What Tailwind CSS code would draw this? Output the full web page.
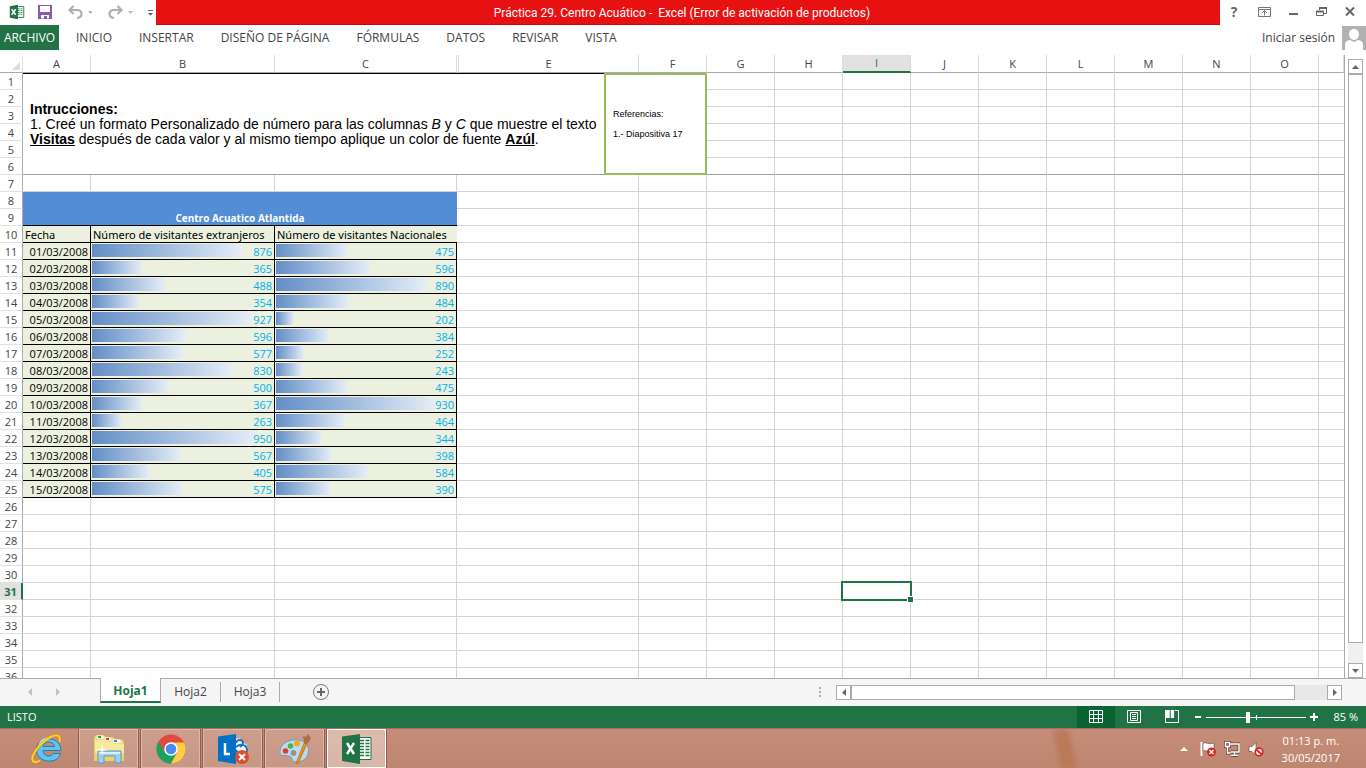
<!DOCTYPE html>
<html lang="es">
<head>
    <meta charset="UTF-8">
    <meta name="viewport" content="width=device-width, initial-scale=1.0">
    <title>Práctica 29. Centro Acuático - Excel</title>
    <script src="https://cdn.jsdelivr.net/npm/@tailwindcss/browser@4"></script>
</head>
<body class="h-screen overflow-hidden flex flex-col bg-white text-[#444444] text-xs font-['Open_Sans','Noto_Sans',sans-serif]">

    <!-- Title bar -->
    <header class="h-[25px] shrink-0 flex">
        <div class="w-[156px] shrink-0 flex items-center pl-2 pb-[2px]">
            <svg class="w-5 h-4 mr-3" viewBox="0 0 20 16">
                <path d="M10 2h7.500v12H10z" fill="#fff" stroke="#217346"/>
                <path d="M11 4.500h2M14 4.500h2M11 6.500h2M14 6.500h2M11 8.500h2M14 8.500h2M11 10.500h2M14 10.500h2" stroke="#217346"/>
                <path d="M2 1.500L11 0v16l-9-1.500z" fill="#217346"/>
                <path d="M4 5l4.500 6M8.500 5L4 11" stroke="#fff" stroke-width="1.600"/>
            </svg>
            <button aria-label="Guardar" class="mr-4">
                <svg class="w-[14px] h-[14px]" viewBox="0 0 14 14">
                    <path d="M0 0h14v14H0z" fill="#8b5bae"/>
                    <path d="M2 1h10v6H2zM3 10h8v3.500H9V11H6v2.500H3z" fill="#fff"/>
                </svg>
            </button>
            <button aria-label="Deshacer" class="mr-4">
                <svg class="w-6 h-4" viewBox="0 0 24 16">
                    <path d="M5.500 2L1.500 6l4 4M2 6h7c6 0 6 7.500 0 8" fill="none" stroke="#b0b0b0" stroke-width="2.200"/>
                    <path d="M20 7h5l-2.500 3z" fill="#b8b8b8"/>
                </svg>
            </button>
            <button aria-label="Rehacer" class="mr-3">
                <svg class="w-7 h-4" viewBox="0 0 28 16">
                    <path d="M9.500 2l4 4-4 4M13 6H6c-6 0-6 7.500 0 8" fill="none" stroke="#b0b0b0" stroke-width="2.200"/>
                    <path d="M20 7h5l-2.500 3z" fill="#b8b8b8"/>
                </svg>
            </button>
            <button aria-label="Personalizar barra de acceso rápido">
                <svg class="w-2 h-3" viewBox="0 0 8 12">
                    <path d="M0 4.500h5" stroke="#666"/>
                    <path d="M0 7h5L2.500 9.500z" fill="#555"/>
                </svg>
            </button>
        </div>
        <h1 class="flex-1 bg-[#e81111] border-b border-[#c90d0d] text-white text-center whitespace-pre leading-6 pt-px pr-3 font-['Roboto',sans-serif]">Práctica 29. Centro Acuático -  Excel (Error de activación de productos)</h1>
        <div class="w-[146px] shrink-0 flex items-center justify-between pl-[6px] pr-[10px] pb-[2px] text-[#666666]">
            <button aria-label="Ayuda" class="w-4 text-sm leading-4 font-bold">?</button>
            <button aria-label="Opciones de presentación de la cinta">
                <svg class="w-[14px] h-3" viewBox="0 0 14 12" fill="none" stroke="#777"><path d="M.5 1.500h12v9H.5zM.5 3.500h12M6.500 9.500v-5M4 7l2.500-2.500L9 7"/></svg>
            </button>
            <button aria-label="Minimizar">
                <svg class="w-3 h-3" viewBox="0 0 12 12"><path d="M1 8h9" stroke="#666" stroke-width="2"/></svg>
            </button>
            <button aria-label="Restaurar">
                <svg class="w-3 h-3" viewBox="0 0 12 12" fill="none" stroke="#666"><path d="M3.500 4V2.500h7v5H8"/><path d="M3 2h8" stroke-width="2"/><path d="M.5 5.500h7v4h-7z"/><path d="M0 5.500h8" stroke-width="2"/></svg>
            </button>
            <button aria-label="Cerrar">
                <svg class="w-3 h-3" viewBox="0 0 12 12"><path d="M2 1.500l8 8M10 1.500l-8 8" stroke="#666" stroke-width="2"/></svg>
            </button>
        </div>
    </header>

    <!-- Ribbon tabs -->
    <nav class="h-[25px] shrink-0 flex items-center gap-[27px] mb-[5px]">
        <button class="h-full w-[59px] bg-[#217346] text-white -mr-[10px]">ARCHIVO</button>
        <button>INICIO</button>
        <button>INSERTAR</button>
        <button>DISEÑO DE PÁGINA</button>
        <button>FÓRMULAS</button>
        <button>DATOS</button>
        <button>REVISAR</button>
        <button>VISTA</button>
        <div class="ml-auto flex items-center gap-[7px]">
            <a href="#">Iniciar sesión</a>
            <svg class="w-6 h-6" viewBox="0 0 24 24">
                <path d="M0 0h24v24H0z" fill="#b1b1b1"/>
                <path d="M12 3c3.200 0 5 2.300 5 5.300S14.800 14 12 14s-5-2.700-5-5.700S8.800 3 12 3zM3 24v-5c0-3 1.500-4.500 5-5l4 2 4-2c3.500.5 5 2 5 5v5z" fill="#fff"/>
            </svg>
        </div>
    </nav>

    <!-- Worksheet -->
    <main class="flex-1 min-h-0 flex bg-white">
        <div class="flex-1 min-w-0 relative overflow-hidden border-r border-[#ababab]">
            <table class="w-full table-fixed border-separate border-spacing-0 text-[11px] leading-[14px]">
                <colgroup>
                    <col class="w-[23px]"><col class="w-[68px]"><col class="w-[184px]"><col class="w-[182px]"><col class="w-[2px]"><col class="w-[180px]">
                    <col class="w-[68px]"><col class="w-[68px]"><col class="w-[68px]"><col class="w-[68px]"><col class="w-[68px]">
                    <col class="w-[68px]"><col class="w-[68px]"><col class="w-[68px]"><col class="w-[68px]"><col class="w-[68px]"><col>
                </colgroup>
                <thead id="sheet-head"></thead>
                <tbody id="sheet-body"></tbody>
            </table>
            <!-- Text box floating over the cells -->
            <div class="absolute left-[604px] top-[18px] w-[103px] h-[102px] bg-white border-2 border-[#9bbb59] px-[7px] flex flex-col justify-center gap-2 text-black text-[9px] leading-3 font-['Liberation_Sans',sans-serif]">
                <p>Referencias:</p>
                <p class="whitespace-nowrap">1.- Diapositiva 17</p>
            </div>
        </div>
        <!-- Vertical scrollbar -->
        <div class="w-[21px] shrink-0 flex flex-col pl-[3px] pr-[3px] pt-1">
            <button aria-label="Subir" class="h-[15px] border border-[#ababab] bg-white flex items-center justify-center">
                <svg class="w-[7px] h-1" viewBox="0 0 7 4"><path d="M0 4h7L3.500 0z" fill="#666"/></svg>
            </button>
            <div class="flex-1 bg-[#f0f0f0] pb-5 flex">
                <div class="flex-1 border border-[#ababab] bg-white"></div>
            </div>
            <button aria-label="Bajar" class="h-[15px] border border-[#ababab] bg-white flex items-center justify-center">
                <svg class="w-[7px] h-1" viewBox="0 0 7 4"><path d="M0 0h7L3.500 4z" fill="#666"/></svg>
            </button>
        </div>
    </main>

    <!-- Sheet tabs -->
    <div class="h-7 shrink-0 flex bg-[#f5f5f5] border-t border-[#ababab]">
        <div class="w-[100px] shrink-0 flex items-center justify-center gap-6 pb-[2px] pr-3">
            <svg class="w-1 h-2" viewBox="0 0 4 8"><path d="M4 0v8L0 4z" fill="#c0c0c0"/></svg>
            <svg class="w-1 h-2" viewBox="0 0 4 8"><path d="M0 0v8l4-4z" fill="#c0c0c0"/></svg>
        </div>
        <button class="w-[61px] h-[25px] -mt-px pt-[2px] bg-white border-x border-x-[#ababab] border-b-2 border-b-[#217346] text-[#217346] font-bold">Hoja1</button>
        <button class="w-[60px] h-5 mt-[3px] border-r border-[#ababab]">Hoja2</button>
        <button class="w-[59px] h-5 mt-[3px] border-r border-[#ababab]">Hoja3</button>
        <button aria-label="Hoja nueva" class="ml-8 mb-[2px]">
            <svg class="w-[18px] h-[18px]" viewBox="0 0 18 18" fill="none" stroke="#777"><circle cx="9" cy="9" r="7.500"/><path d="M9 5v8M5 9h8" stroke="#666" stroke-width="2"/></svg>
        </button>
        <svg class="ml-auto mt-[7px] w-1 h-3 mr-[14px]" viewBox="0 0 4 12"><path d="M1 1h2v2H1zM1 5h2v2H1zM1 9h2v2H1z" fill="#ababab"/></svg>
        <!-- Horizontal scrollbar -->
        <div class="w-[506px] h-[15px] mt-[6px] mr-6 flex bg-[#e8e8e8]">
            <button aria-label="Izquierda" class="w-[15px] border border-[#ababab] bg-white flex items-center justify-center">
                <svg class="w-1 h-[7px]" viewBox="0 0 4 7"><path d="M4 0v7L0 3.500z" fill="#666"/></svg>
            </button>
            <div class="flex-1 mr-8 bg-white border border-[#ababab]"></div>
            <button aria-label="Derecha" class="w-[15px] border border-[#ababab] bg-white flex items-center justify-center">
                <svg class="w-1 h-[7px]" viewBox="0 0 4 7"><path d="M0 0v7l4-3.500z" fill="#666"/></svg>
            </button>
        </div>
    </div>

    <!-- Status bar -->
    <div class="h-[22px] shrink-0 flex items-center bg-[#217346] text-white text-[11px] pl-[7px] pr-2">
        <span>LISTO</span>
        <button aria-label="Normal" class="ml-auto w-[38px] h-full bg-[#0a6332] flex items-center justify-center">
            <svg class="w-[14px] h-[14px]" viewBox="0 0 14 14" fill="none" stroke="#fff"><path d="M.5.5h13v12H.5zM4.500.5v12M9.500.5v12M.5 4.500h13M.5 8.500h13"/></svg>
        </button>
        <button aria-label="Diseño de página" class="w-[38px] h-full flex items-center justify-center">
            <svg class="w-[14px] h-[14px]" viewBox="0 0 14 14" fill="none" stroke="#fff"><path d="M.5.5h13v12H.5zM3.500 2.500h7v8h-7zM5 4.500h4M5 6.500h4M5 8.500h4"/></svg>
        </button>
        <button aria-label="Vista previa de salto de página" class="w-[38px] h-full flex items-center justify-center">
            <svg class="w-[14px] h-[14px]" viewBox="0 0 14 14"><path d="M.5.5h13v12H.5z" fill="none" stroke="#fff"/><path d="M0 0h5v8H0zM5.500 0h4v8h-4z" fill="#fff"/><path d="M5.200 0v8M9.500 0v8" stroke="#217346" stroke-width=".8"/></svg>
        </button>
        <button aria-label="Alejar" class="ml-px">
            <svg class="w-3 h-3" viewBox="0 0 12 12"><path d="M3 6h6" stroke="#fff" stroke-width="2"/></svg>
        </button>
        <div class="relative mx-[2px] flex items-center">
            <input type="range" aria-label="Zoom" min="0" max="100" value="42" class="w-[100px] h-3 appearance-none bg-[linear-gradient(#ffffff,#ffffff)] bg-[length:100%_1px] bg-center bg-no-repeat [&::-webkit-slider-thumb]:appearance-none [&::-webkit-slider-thumb]:w-1 [&::-webkit-slider-thumb]:h-[11px] [&::-webkit-slider-thumb]:bg-white">
            <span class="absolute left-1/2 top-1 w-px h-[5px] bg-white"></span>
        </div>
        <button aria-label="Acercar">
            <svg class="w-3 h-3" viewBox="0 0 12 12"><path d="M2 6h8M6 2v8" stroke="#fff" stroke-width="2"/></svg>
        </button>
        <span class="w-[38px] text-right">85 %</span>
    </div>

    <!-- Windows taskbar -->
    <footer class="h-10 shrink-0 relative overflow-hidden flex items-stretch gap-[3px] pl-[17px] pr-[26px] border-t border-[#a56f5e] bg-linear-to-b from-[#c68d79] to-[#bd8670] text-white text-[11px]">
        <div class="absolute left-[1057px] top-0 w-4 h-10 skew-x-12 bg-[#b97450]/80 blur-[3px]"></div>
        <button aria-label="Internet Explorer" class="w-[59px] flex items-center justify-center">
            <svg class="w-8 h-8" viewBox="0 0 32 32" fill="none">
                <path d="M30 17.500H12c.3 6.500 8 7 10.500 3h7C27.500 31.500 5.500 31 5.500 16.500S29.500 2 30 17.500zM12 13.500h11.500c-.8-6-10.500-6-11.500 0z" fill="#5cc6f0" stroke="#1c7fb8"/>
                <path d="M8 13c1-6 7-8.500 11-8" stroke="#c4edfb" stroke-width="1.500"/>
                <path d="M28.500 9c1.500-6-2-8.500-9-5C10 9-1.500 23 2 28c1.500 1.800 4.500 1 7-.5" stroke="#c98f10" stroke-width="3"/>
                <path d="M28.500 9c1.500-6-2-8.500-9-5C10 9-1.500 23 2 28c1.500 1.800 4.500 1 7-.5" stroke="#fbd02f" stroke-width="2"/>
            </svg>
        </button>
        <button aria-label="Explorador de archivos" class="w-[59px] flex items-center justify-center border border-[#dcb8aa] bg-white/15 shadow-[0_0_0_1px_#8f5e50]">
            <svg class="w-8 h-8" viewBox="0 0 32 32">
                <path d="M1 4l3-2h7l2 2h7l2 2h6l3 2v20H1z" fill="#f0dc85" stroke="#c7a74b" stroke-width=".6"/>
                <path d="M4 2.500h6l1 3H4zM12 4.500h6l1 3h-7zM20 6.500h7l1 3h-8z" fill="#fff"/>
                <path d="M2 7h9l2 2h7l1 2h10v17H2z" fill="#f7ea9f"/>
                <path d="M2 20h29v8H2z" fill="#ead271"/>
                <path d="M5 3h3v2H5z" fill="#10ae3b"/><path d="M13 5h3v2h-3z" fill="#d8442b"/><path d="M21 7h3v2h-3z" fill="#2a8cde"/>
                <path d="M5 30V18h23v12h-6v-7H11v7z" fill="#9dcfec" stroke="#5a9dc5"/>
                <path d="M6 19h21v2H6z" fill="#d6effa"/>
                <path d="M9 11l1 5 5 1-5 1-1 4-1-4-5-1 5-1z" fill="#fff" fill-opacity=".8"/>
            </svg>
        </button>
        <button aria-label="Google Chrome" class="w-[59px] flex items-center justify-center border border-[#dcb8aa] bg-white/15 shadow-[0_0_0_1px_#8f5e50]">
            <svg class="w-[30px] h-[30px]" viewBox="0 0 30 30">
                <circle cx="15" cy="15" r="14.500" fill="#dd4b3e"/>
                <path d="M2.400 7.800A14.500 14.500 0 0 0 15 29.500L21 18.500 9.200 18.500z" fill="#1aa260"/>
                <path d="M15 8.500h13A14.500 14.500 0 0 1 15 29.500l6-11z" fill="#ffce44"/>
                <circle cx="15" cy="15" r="6.800" fill="#fff"/><circle cx="15" cy="15" r="5.300" fill="#4a8af4"/>
            </svg>
        </button>
        <button aria-label="Lync" class="w-[59px] flex items-center justify-center border border-[#dcb8aa] bg-white/15 shadow-[0_0_0_1px_#8f5e50]">
            <svg class="w-8 h-8" viewBox="0 0 32 32">
                <path d="M18 7c3-3 8-1 8 3 5 1 6 7 3 11l-4 5h-7z" fill="#fff"/>
                <path d="M19 10c1-4 7-4 7 0 0 2-1 3-3 4" fill="none" stroke="#0f74c8" stroke-width="1.800"/>
                <path d="M19 14c5-4 11-2 11 3 0 4-4 6-7 5-3-1-3-4-4-5" fill="none" stroke="#0f74c8" stroke-width="2"/>
                <path d="M1 3.500L19 1v30L1 28z" fill="#0072c6"/>
                <path d="M8 10v11h5" fill="none" stroke="#fff" stroke-width="2.500"/>
                <circle cx="25" cy="24" r="7" fill="#d84c2f"/>
                <path d="M22 21l6 6M28 21l-6 6" stroke="#fff" stroke-width="2"/>
            </svg>
        </button>
        <button aria-label="Paint" class="w-[59px] flex items-center justify-center border border-[#dcb8aa] bg-white/15 shadow-[0_0_0_1px_#8f5e50]">
            <svg class="w-8 h-8" viewBox="0 0 32 32">
                <path d="M1 18C2 10 11 6 19 7s12 7 10 13c-1 7-7 9-13 9-4-1-2-5-6-6S0 24 1 18z" fill="#bcdced" stroke="#6e9db8"/>
                <circle cx="14.500" cy="20" r="2.500" fill="#b98471" stroke="#6e9db8"/>
                <circle cx="6.500" cy="18" r="2.800" fill="#df3c32"/><circle cx="11.500" cy="13" r="2.800" fill="#51b34c"/><circle cx="18" cy="10.500" r="3" fill="#f2a724"/>
                <path d="M17 30l8-20 3 1-9 20z" fill="#e98c28" stroke="#b96414" stroke-width=".6"/>
                <path d="M25 10c1-2-1-4-1-7l3 1 2-3 3 4c-1 2-2 4-4 6z" fill="#a9713e"/>
            </svg>
        </button>
        <button aria-label="Excel" class="w-[59px] flex items-center justify-center border border-white bg-white/40 shadow-[0_0_0_1px_#8f5e50]">
            <svg class="w-8 h-8" viewBox="0 0 32 32">
                <path d="M17 4.500h13v22H17z" fill="#fff" stroke="#217346"/>
                <path d="M19 7.500h4M24.500 7.500h4M19 10.500h4M24.500 10.500h4M19 13.500h4M24.500 13.500h4M19 16.500h4M24.500 16.500h4M19 19.500h4M24.500 19.500h4M19 22.500h4M24.500 22.500h4" stroke="#217346" stroke-width="1.500"/>
                <path d="M1 3.500L19 1v30L1 28z" fill="#217346"/>
                <path d="M6 10l7 11M13 10L6 21" stroke="#fff" stroke-width="2.400"/>
            </svg>
        </button>
        <div class="ml-auto flex items-center gap-2 mr-[15px] pt-px">
            <svg class="w-2 h-1 mr-1" viewBox="0 0 8 4"><path d="M0 4h8L4 0z" fill="#fff"/></svg>
            <svg class="w-4 h-4" viewBox="0 0 16 16">
                <path d="M1.500 1v14" stroke="#fff" stroke-width="2"/><path d="M3 2c4-1 5 2 11 0v8c-5 2-7-1-11 0z" fill="#fff" stroke="#5a4038" stroke-width=".6"/>
                <circle cx="11.500" cy="11" r="4.500" fill="#d9261c"/><path d="M9.500 9l4 4M13.500 9l-4 4" stroke="#fff" stroke-width="1.500"/>
            </svg>
            <svg class="w-4 h-4" viewBox="0 0 16 16" fill="none">
                <path d="M6 3h9v8H6.500M10.500 11v3M7 14.200h7M1.500 1.500h4v4h-4zM3.500 6v6h3" stroke="#5a4038" stroke-width="3"/>
                <path d="M6 3h9v8H6.500M10.500 11v3M7 14.200h7M1.500 1.500h4v4h-4zM3.500 6v6h3" stroke="#fff" stroke-width="1.500"/>
            </svg>
            <svg class="w-4 h-4" viewBox="0 0 16 16">
                <path d="M1 5.500h3L8 1.500v13L4 10.500H1z" fill="#fff" stroke="#5a4038" stroke-width=".6"/>
                <circle cx="11" cy="11" r="3.800" fill="#fff" stroke="#d9261c" stroke-width="1.800"/><path d="M8.500 8.500l5 5" stroke="#d9261c" stroke-width="1.800"/>
            </svg>
        </div>
        <time datetime="2017-05-30T13:13" class="flex flex-col justify-center text-center leading-[17px]"><span>01:13 p. m.</span><span>30/05/2017</span></time>
    </footer>

    <script>
        const columns = ["A", "B", "C", "", "E", "F", "G", "H", "I", "J", "K", "L", "M", "N", "O", ""];
        const visits = [
            ["01/03/2008", 876, 475], ["02/03/2008", 365, 596], ["03/03/2008", 488, 890],
            ["04/03/2008", 354, 484], ["05/03/2008", 927, 202], ["06/03/2008", 596, 384],
            ["07/03/2008", 577, 252], ["08/03/2008", 830, 243], ["09/03/2008", 500, 475],
            ["10/03/2008", 367, 930], ["11/03/2008", 263, 464], ["12/03/2008", 950, 344],
            ["13/03/2008", 567, 398], ["14/03/2008", 405, 584], ["15/03/2008", 575, 390]
        ];

        const instructions = `
            <td colspan="5" rowspan="6" class="border-t border-t-black border-b border-b-[#a0a0a0] px-[7px] text-black text-sm leading-4 font-['Liberation_Sans',sans-serif]">
                <p class="font-bold">Intrucciones:</p>
                <p class="leading-[15px]">1. Creé un formato Personalizado de número para las columnas <i>B</i> y <i>C</i> que muestre el texto<br><b class="underline">Visitas</b> después de cada valor y al mismo tiempo aplique un color de fuente <b class="underline">Azúl</b>.</p>
            </td>`;

        // Data bars run from 10% to 90% of the cell between the lowest and highest value
        function dataBar(value) {
            const width = Math.round(18 + (value - 202) * 0.194);
            return `<td class="bg-[#ebf1de] border-r border-b border-black text-[#00b0f0]">
                <div class="relative h-4 pt-[2px] pr-[2px] text-right">
                    <div class="absolute left-px top-px h-[13px] bg-linear-to-r from-[#638ec6] to-[#e6edf6]" style="width:${width}px"></div>
                    <span class="relative">${value}</span>
                </div>
            </td>`;
        }

        function emptyCells(row, from) {
            let html = "";
            for (let c = from; c < columns.length; c++) {
                const side = c === 3 || c === 15 ? "" : "border-r border-r-[#d4d4d4]";
                const bottom = row === 6 ? "border-b border-b-[#a0a0a0]" : "border-b border-b-[#d4d4d4]";
                const selected = row === 31 && columns[c] === "I";
                html += `<td class="${side} ${bottom} ${selected ? "relative" : ""}">${selected
                    ? `<div class="absolute -left-[2px] -top-[2px] w-[71px] h-5 border-2 border-[#217346]"><span class="absolute -right-[4px] -bottom-[4px] w-[7px] h-[7px] bg-[#217346] border border-white"></span></div>`
                    : ""}</td>`;
            }
            return html;
        }

        document.getElementById("sheet-head").innerHTML = `<tr class="h-[18px]">
            <td class="border-r border-r-[#e1e1e1] border-b border-b-[#ababab]"><svg class="w-2 h-2 ml-3 mt-1" viewBox="0 0 8 8"><path d="M8 0v8H0z" fill="#dcdcdc"/></svg></td>
            ${columns.map(c => `<th scope="col" class="font-normal border-r border-r-[#dcdcdc] ${c === "I" ? "bg-[#e1e1e1] text-[#217346] border-b-2 border-b-[#217346]" : "border-b border-b-[#ababab]"}">${c}</th>`).join("")}
        </tr>`;

        let rows = "";
        for (let r = 1; r <= 36; r++) {
            const active = r === 31 ? "bg-[#e1e1e1] text-[#217346] font-bold border-r-2 border-r-[#217346]" : "font-normal border-r border-r-[#ababab]";
            rows += `<tr class="h-[17px]"><th scope="row" class="pt-[2px] border-b border-b-[#e1e1e1] ${active}">${r}</th>`;
            if (r === 1) {
                rows += instructions + emptyCells(r, 5);
            } else if (r <= 6) {
                rows += emptyCells(r, 5);
            } else if (r === 8) {
                rows += `<td colspan="3" rowspan="2" class="bg-[#538dd5] border-b border-b-black text-white font-bold text-center align-bottom text-[10px]">Centro Acuatico Atlantida</td>` + emptyCells(r, 3);
            } else if (r === 9) {
                rows += emptyCells(r, 3);
            } else if (r === 10) {
                rows += `<td class="bg-[#ebf1de] border-r border-b border-black text-black pt-[2px] pl-[2px] font-['Noto_Sans',sans-serif]">Fecha</td>
                    <td class="bg-[#ebf1de] border-r border-b border-black text-black pt-[2px] pl-[2px] whitespace-nowrap font-['Noto_Sans',sans-serif]">Número de visitantes extranjeros</td>
                    <td class="bg-[#ebf1de] border-b border-black text-black pt-[2px] pl-[2px] whitespace-nowrap font-['Noto_Sans',sans-serif]">Número de visitantes Nacionales</td>` + emptyCells(r, 3);
            } else if (r >= 11 && r <= 25) {
                const [date, foreign, national] = visits[r - 11];
                rows += `<td class="bg-[#ebf1de] border-r border-b border-black text-black text-right pt-[2px] pr-[2px]">${date}</td>` + dataBar(foreign) + dataBar(national) + emptyCells(r, 3);
            } else {
                rows += emptyCells(r, 0);
            }
            rows += "</tr>";
        }
        document.getElementById("sheet-body").innerHTML = rows;
    </script>

</body>
</html>
